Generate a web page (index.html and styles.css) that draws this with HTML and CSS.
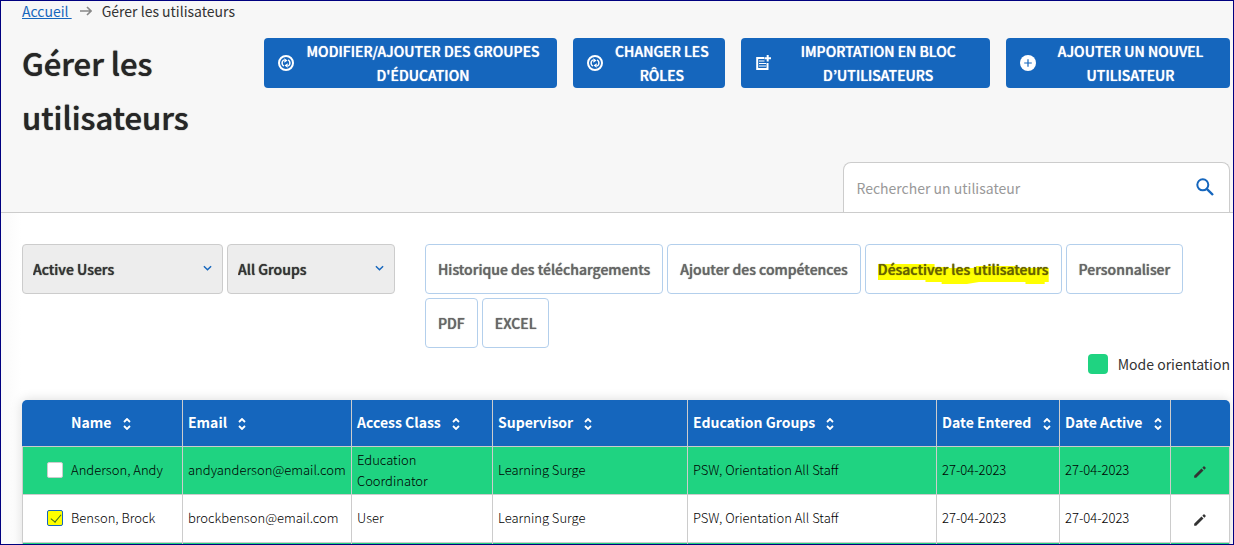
FILE: index.html
```html
<!DOCTYPE html>
<html lang="fr">
<head>
    <meta charset="UTF-8">
    <meta name="viewport" content="width=device-width, initial-scale=1.0">
    <title>Gérer les utilisateurs</title>
    <link rel="stylesheet" href="styles.css">
</head>
<body>
    <!-- shared icons -->
    <svg class="sprite" aria-hidden="true">
        <symbol id="icon-sync" viewBox="0 0 16 16">
            <circle cx="8" cy="8" r="7" fill="none" stroke="currentColor" stroke-width="2"/>
            <path d="M5.8 11.2A3.8 3.8 0 0 1 5.8 4.8M10.2 4.8A3.8 3.8 0 0 1 10.2 11.2" fill="none" stroke="currentColor" stroke-width="1.5"/>
            <path d="M6.3 3.2l3.3 2.2-3.3 2.4zM9.7 12.8l-3.3-2.2 3.3-2.4z" fill="currentColor"/>
        </symbol>
        <symbol id="icon-sort" viewBox="0 0 8 12">
            <path d="M1 4l3-3 3 3M1 8l3 3 3-3" fill="none" stroke="currentColor" stroke-width="1.8"/>
        </symbol>
        <symbol id="icon-pencil" viewBox="0 0 24 24">
            <path d="M2 18.5V22h3.5L18 9.5 14.5 6zM21.5 6c.5-.5.5-1.2 0-1.7l-1.8-1.8c-.5-.5-1.2-.5-1.7 0L16 4.5 19.5 8z" fill="currentColor"/>
        </symbol>
        <symbol id="icon-chevron" viewBox="0 0 10 6">
            <path d="M1 1l4 4 4-4" fill="none" stroke="currentColor" stroke-width="1.6"/>
        </symbol>
    </svg>

    <header class="page-header">
        <nav class="breadcrumb">
            <a href="#">Accueil&nbsp;</a>
            <svg class="arrow" viewBox="0 0 12 10"><path d="M0 5h11M7 1l4 4-4 4" fill="none" stroke="currentColor" stroke-width="1.6"/></svg>
            <span>Gérer les utilisateurs</span>
        </nav>
        <div class="title-row">
            <h1>Gérer les utilisateurs</h1>
            <div class="actions">
                <button type="button" class="btn-primary">
                    <svg class="icon"><use href="#icon-sync"/></svg>
                    <span>MODIFIER/AJOUTER DES GROUPES D'ÉDUCATION</span>
                </button>
                <button type="button" class="btn-primary">
                    <svg class="icon"><use href="#icon-sync"/></svg>
                    <span>CHANGER LES RÔLES</span>
                </button>
                <button type="button" class="btn-primary">
                    <svg class="icon" viewBox="0 0 16 16">
                        <path d="M9 3H2.2v11H12.5V8" fill="none" stroke="currentColor" stroke-width="2"/>
                        <path d="M4 6h5.5M4 8.500h7M4 11h7" stroke="currentColor" stroke-width="1.2"/>
                        <path d="M12.700 0v6.600M9.400 3.300h6.600" stroke="currentColor" stroke-width="2"/>
                    </svg>
                    <span>IMPORTATION EN BLOC D’UTILISATEURS</span>
                </button>
                <button type="button" class="btn-primary">
                    <svg class="icon" viewBox="0 0 16 16">
                        <circle cx="8" cy="8" r="8" fill="currentColor"/>
                        <path class="plus" d="M8 4.200v7.600M4.200 8h7.600" stroke-width="1.2"/>
                    </svg>
                    <span>AJOUTER UN NOUVEL UTILISATEUR</span>
                </button>
            </div>
        </div>
        <form class="search-box">
            <input type="search" placeholder="Rechercher un utilisateur" aria-label="Rechercher un utilisateur">
            <button type="button" aria-label="Rechercher">
                <svg viewBox="0 0 18 18"><circle cx="6.800" cy="6.800" r="5.500" fill="none" stroke="currentColor" stroke-width="2"/><path d="M10.800 10.800l6.200 6.200" stroke="currentColor" stroke-width="2.400"/></svg>
            </button>
        </form>
    </header>

    <main class="content">
        <div class="toolbar">
            <div class="filters">
                <div class="select status">
                    <select aria-label="Status">
                        <option>Active Users</option>
                    </select>
                    <svg><use href="#icon-chevron"/></svg>
                </div>
                <div class="select group">
                    <select aria-label="Groups">
                        <option>All Groups</option>
                    </select>
                    <svg><use href="#icon-chevron"/></svg>
                </div>
            </div>
            <div class="tools">
                <button type="button" class="btn-outline">Historique des téléchargements</button>
                <button type="button" class="btn-outline">Ajouter des compétences</button>
                <button type="button" class="btn-outline">
                    <span class="marked">
                        <svg viewBox="0 0 169 21" preserveAspectRatio="none"><path d="M0 0H56V3H70V4H97V2H136V4H169V18H165V20H146V18H100L88 20H63V18H47V16H0z" fill="#ff0"/></svg>
                        Désactiver les utilisateurs
                    </span>
                </button>
                <button type="button" class="btn-outline">Personnaliser</button>
                <button type="button" class="btn-outline">PDF</button>
                <button type="button" class="btn-outline">EXCEL</button>
            </div>
        </div>

        <div class="legend"><span class="swatch"></span>Mode orientation</div>

        <div class="table-wrap">
            <table>
                <colgroup>
                    <col class="col-name">
                    <col class="col-email">
                    <col class="col-class">
                    <col class="col-supervisor">
                    <col class="col-groups">
                    <col class="col-entered">
                    <col class="col-active">
                    <col class="col-edit">
                </colgroup>
                <thead>
                    <tr>
                        <th class="name">Name <svg class="sort"><use href="#icon-sort"/></svg></th>
                        <th>Email <svg class="sort"><use href="#icon-sort"/></svg></th>
                        <th>Access Class <svg class="sort"><use href="#icon-sort"/></svg></th>
                        <th>Supervisor <svg class="sort"><use href="#icon-sort"/></svg></th>
                        <th>Education Groups <svg class="sort"><use href="#icon-sort"/></svg></th>
                        <th>Date Entered <svg class="sort"><use href="#icon-sort"/></svg></th>
                        <th>Date Active <svg class="sort"><use href="#icon-sort"/></svg></th>
                        <th></th>
                    </tr>
                </thead>
                <tbody>
                    <tr class="orientation">
                        <td><label class="user"><input type="checkbox">Anderson, Andy</label></td>
                        <td>andyanderson@email.com</td>
                        <td>Education Coordinator</td>
                        <td>Learning Surge</td>
                        <td>PSW, Orientation All Staff</td>
                        <td>27-04-2023</td>
                        <td>27-04-2023</td>
                        <td><button type="button" class="edit" aria-label="Modifier"><svg><use href="#icon-pencil"/></svg></button></td>
                    </tr>
                    <tr>
                        <td><label class="user"><input type="checkbox" checked>Benson, Brock</label></td>
                        <td>brockbenson@email.com</td>
                        <td>User</td>
                        <td>Learning Surge</td>
                        <td>PSW, Orientation All Staff</td>
                        <td>27-04-2023</td>
                        <td>27-04-2023</td>
                        <td><button type="button" class="edit" aria-label="Modifier"><svg><use href="#icon-pencil"/></svg></button></td>
                    </tr>
                    <tr class="orientation">
                        <td></td><td></td><td></td><td></td><td></td><td></td><td></td><td></td>
                    </tr>
                </tbody>
            </table>
        </div>
    </main>
</body>
</html>
```
FILE: styles.css
```css
* {
    margin: 0;
    padding: 0;
    box-sizing: border-box;
}

body {
    height: 100vh;
    overflow: hidden;
    border: 1px solid #000080;
    background: #fff;
    color: #333;
    font-family: 'Noto Sans CJK KR', 'Noto Sans', sans-serif;
    font-size: 14px;
    line-height: 20px;
}

button, input, select {
    font: inherit;
    color: inherit;
}

button {
    cursor: pointer;
}

.sprite {
    display: none;
}

.page-header {
    padding: 0 3px 0 21px;
    background: #f7f7f7;
    border-bottom: 1px solid #ccc;
}

.breadcrumb {
    display: flex;
    align-items: center;
    gap: 8px;
}

.breadcrumb a {
    color: #1566bd;
}

.arrow {
    width: 12px;
    height: 10px;
    margin-right: 2px;
    color: #888;
}

.title-row {
    display: flex;
    align-items: flex-start;
    gap: 16px;
    padding-top: 15px;
}

h1 {
    flex: 1;
    color: #262626;
    font-size: 31px;
    font-weight: 500;
    line-height: 54px;
    text-shadow: 0 0 1px currentColor;
}

.actions {
    flex: 0 0 80%;
    display: grid;
    grid-template-columns: 294fr 152fr 249fr 224fr;
    gap: 16px;
    margin-top: 2px;
}

.btn-primary {
    display: flex;
    align-items: center;
    gap: 7px;
    height: 50px;
    padding: 0 12px 0 14px;
    border: none;
    border-radius: 4px;
    background: #1566bd;
    color: #fff;
    font-weight: 500;
    line-height: 24px;
    text-shadow: 0 0 1px currentColor;
}

.btn-primary span {
    flex: 1;
}

.icon {
    flex: none;
    width: 16px;
    height: 16px;
}

.plus {
    stroke: #1566bd;
}

.search-box {
    display: flex;
    align-items: center;
    width: 32%;
    height: 50px;
    margin-top: 18px;
    margin-left: auto;
    padding: 0 15px 0 12px;
    border: 1px solid #ccc;
    border-bottom: none;
    border-radius: 8px 8px 0 0;
    background: #fff;
}

.search-box input {
    flex: 1;
    border: none;
    outline: none;
    background: none;
}

.search-box input::placeholder {
    color: #999;
}

.search-box button {
    padding-bottom: 2px;
    border: none;
    background: none;
    color: #1566bd;
}

.search-box svg {
    display: block;
    width: 18px;
    height: 18px;
}

.content {
    padding: 31px 3px 0 21px;
    background: linear-gradient(to right, #f9f9f9, #fff 20px);
}

.toolbar {
    display: flex;
    gap: 30px;
}

.filters {
    display: flex;
    gap: 4px;
}

.select {
    position: relative;
    height: 50px;
}

.status {
    width: 201px;
}

.group {
    width: 168px;
}

.select select {
    width: 100%;
    height: 100%;
    padding: 0 10px;
    appearance: none;
    border: 1px solid #ccc;
    border-radius: 4px;
    background: #ededed;
    font-weight: 500;
    text-shadow: 0 0 1px currentColor;
}

.select svg {
    position: absolute;
    top: 21px;
    right: 11px;
    width: 9px;
    height: 6px;
    color: #1566bd;
    pointer-events: none;
}

.tools {
    flex: 1;
    display: flex;
    flex-wrap: wrap;
    gap: 4px;
}

.btn-outline {
    height: 50px;
    padding: 0 12px;
    border: 1px solid #b3cfec;
    border-radius: 4px;
    background: #fff;
    color: #666;
    font-weight: 500;
    text-shadow: 0 0 1px currentColor;
}

.marked {
    position: relative;
    z-index: 0;
    display: block;
    color: #666000;
}

/* highlighter stroke behind the label */
.marked svg {
    position: absolute;
    top: 5px;
    left: 0;
    z-index: -1;
    width: 100%;
    height: 21px;
}

.legend {
    display: flex;
    align-items: center;
    justify-content: flex-end;
    gap: 10px;
    padding: 6px 0 26px;
}

.swatch {
    width: 20px;
    height: 20px;
    border-radius: 4px;
    background: #1fd381;
}

.table-wrap {
    overflow: hidden;
    border-radius: 5px 5px 0 0;
    box-shadow: 0 0 12px rgba(0, 0, 0, 0.15);
}

table {
    width: 100%;
    table-layout: fixed;
    border-spacing: 0;
    background: #fff;
    color: #000;
    font-size: 13px;
    font-weight: 300;
    line-height: 21px;
}

.col-name { width: 161px; }
.col-email { width: 169px; }
.col-class { width: 141px; }
.col-supervisor { width: 195px; }
.col-groups { width: 249px; }
.col-entered { width: 123px; }
.col-active { width: 111px; }
.col-edit { width: 59px; }

th {
    height: 47px;
    padding: 0 5px 2px;
    border-right: 1px solid #ccc;
    border-bottom: 1px solid #ccc;
    background: #1566bd;
    color: #fff;
    font-size: 14px;
    font-weight: 700;
    text-align: left;
    white-space: nowrap;
}

th:last-child {
    border-right: none;
}

th.name {
    padding-left: 49px;
}

.sort {
    width: 8px;
    height: 12px;
    margin-left: 8px;
    vertical-align: middle;
}

td {
    height: 48px;
    padding: 0 5px 2px;
    border-right: 1px solid #ccc;
    border-bottom: 1px solid #ccc;
}

td:first-child {
    border-left: 1px solid #ccc;
}

.orientation td {
    background: #1fd381;
}

.user {
    display: flex;
    align-items: center;
    gap: 8px;
    padding-left: 19px;
}

.user input {
    width: 16px;
    height: 16px;
    appearance: none;
    border: 1px solid #ccc;
    border-radius: 2px;
    background: #fff;
}

.user input:checked {
    border-color: #1566bd;
    background: #ff0;
}

.user input:checked::before {
    content: "";
    display: block;
    width: 5px;
    height: 9px;
    margin: 1px 0 0 5px;
    border: solid #3c6e1e;
    border-width: 0 1px 1px 0;
    transform: rotate(40deg);
}

.edit {
    display: block;
    margin: 4px auto 0;
    border: none;
    background: none;
    color: #333;
}

.edit svg {
    display: block;
    width: 14px;
    height: 14px;
}
```
